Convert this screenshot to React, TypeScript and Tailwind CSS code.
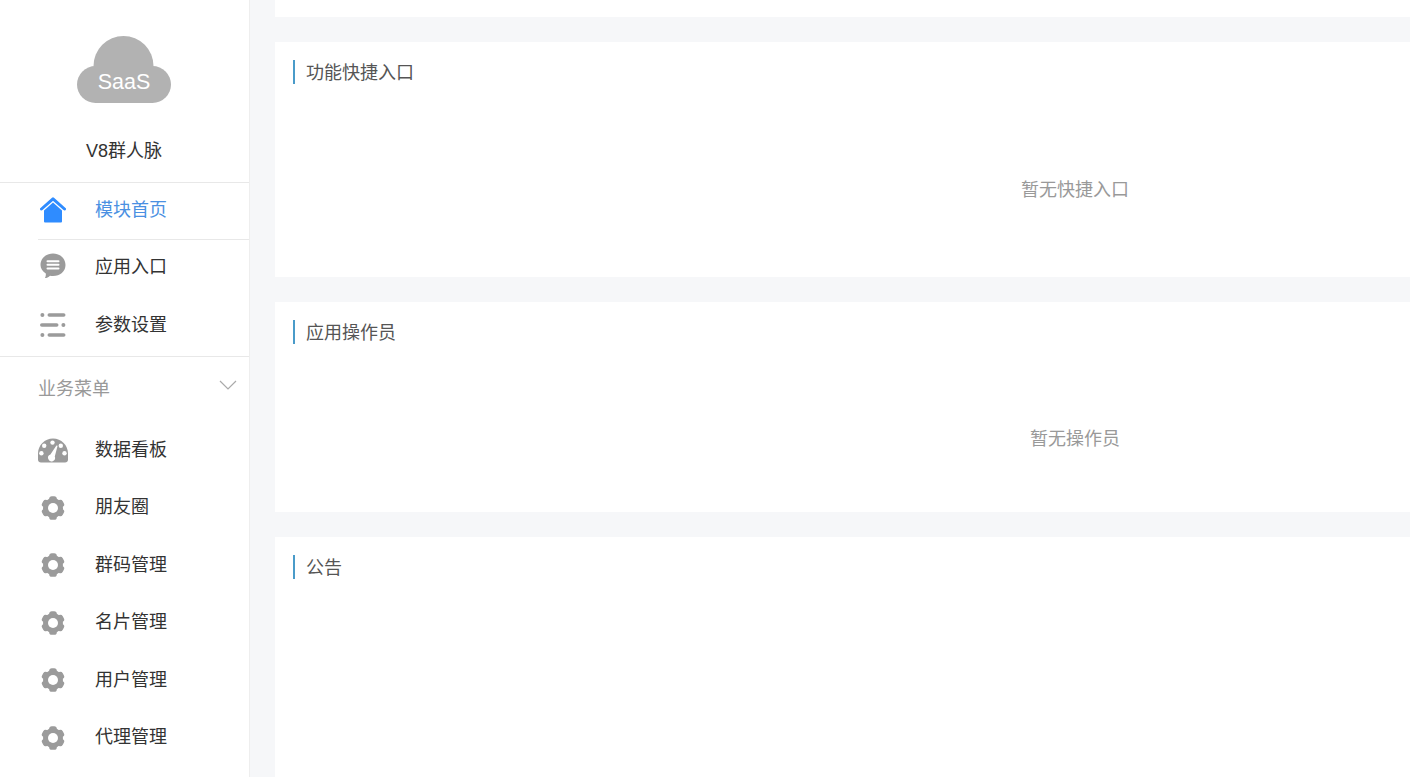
import React from 'react';

const HomeIcon = () => (
  <svg width="26" height="26" viewBox="0 0 26 26">
    <path d="M1.5 12 L13 1.8 L24.5 12" fill="none" stroke="#2f8cff" strokeWidth="3" strokeLinecap="round" strokeLinejoin="round" />
    <path d="M4 13.5 L13 5.6 L22 13.5 V24.5 a1 1 0 0 1 -1 1 H5 a1 1 0 0 1 -1 -1 Z" fill="#2f8cff" />
  </svg>
);

const ChatIcon = () => (
  <svg width="26" height="26" viewBox="0 0 26 26" className="mb-1">
    <path d="M13 .5 C20 .5 25.5 5.2 25.5 12 C25.5 18.5 20 23 13 23 C12 23 11 22.9 10 22.7 C8.6 24.2 6.6 25 5 25 C5.8 23.6 6 22 5.8 20.6 C2.6 18.4 .5 15.5 .5 12 C.5 5.2 6 .5 13 .5 Z" fill="#9b9b9b" />
    <rect x="6.5" y="7.2" width="13" height="2" rx="1" fill="#fff" />
    <rect x="6.5" y="10.8" width="13" height="2" rx="1" fill="#fff" />
    <rect x="6.5" y="14.4" width="13" height="2" rx="1" fill="#fff" />
  </svg>
);

const ListIcon = () => (
  <svg width="26" height="26" viewBox="0 0 26 26" fill="#9b9b9b">
    <circle cx="2.4" cy="3" r="2" />
    <rect x="7.5" y="1.2" width="18" height="3.6" rx="1.8" />
    <rect x="0" y="11.2" width="18.5" height="3.6" rx="1.8" />
    <circle cx="23.4" cy="13" r="2" />
    <circle cx="2.4" cy="23" r="2" />
    <rect x="7.5" y="21.2" width="18" height="3.6" rx="1.8" />
  </svg>
);

const GaugeIcon = () => (
  <svg width="30" height="25" viewBox="0 0 30 25">
    <path d="M15 .5 C23.3 .5 30 7.2 30 15.5 V21.5 C30 23.3 28.8 24.5 27 24.5 H3 C1.2 24.5 0 23.3 0 21.5 V15.5 C0 7.2 6.7 .5 15 .5 Z" fill="#9b9b9b" />
    <circle cx="14.5" cy="4.6" r="2.2" fill="#fff" />
    <circle cx="6.2" cy="7.8" r="2.2" fill="#fff" />
    <circle cx="22.8" cy="7.8" r="2.2" fill="#fff" />
    <circle cx="3.4" cy="15.2" r="2.2" fill="#fff" />
    <circle cx="26.5" cy="15.2" r="2.2" fill="#fff" />
    <path d="M18.4 7.5 L19.6 7.8 L16.8 18.6 A3.5 3.5 0 1 1 12.4 16.6 Z" fill="#fff" />
  </svg>
);

const GearIcon = () => (
  <svg width="26" height="26" viewBox="0 0 26 26" fill="#9b9b9b">
    <circle cx="13" cy="13" r="10" />
    {[0, 60, 120, 180, 240, 300].map((deg) => (
      <rect key={deg} x="9.2" y="1.2" width="7.6" height="7" rx="2.6" transform={`rotate(${deg} 13 13)`} />
    ))}
    <circle cx="13" cy="13" r="5" fill="#fff" />
  </svg>
);

const topMenu = [
  { name: '应用入口', icon: <ChatIcon /> },
  { name: '参数设置', icon: <ListIcon /> },
];

const bizMenu = [
  { name: '数据看板', icon: <GaugeIcon /> },
  { name: '朋友圈', icon: <GearIcon /> },
  { name: '群码管理', icon: <GearIcon /> },
  { name: '名片管理', icon: <GearIcon /> },
  { name: '用户管理', icon: <GearIcon /> },
  { name: '代理管理', icon: <GearIcon /> },
];

const MenuRow = ({ name, icon, className = '' }: { name: string; icon: React.ReactNode; className?: string }) => (
  <div className={`flex h-[57.5px] items-center pl-[38px] ${className}`}>
    <div className="flex w-[30px] justify-center">{icon}</div>
    <span className="ml-[27px] text-[18px] text-[#333]">{name}</span>
  </div>
);

const Card = ({ title, empty, className }: { title: string; empty?: React.ReactNode; className: string }) => (
  <div className={`w-[1600px] shrink-0 bg-white pt-[18px] ${className}`}>
    <div className="ml-[18px] flex h-6 items-center border-l-2 border-[#4a9bc9] pl-[11px] pt-[2px] text-[18px] text-[#555]">
      {title}
    </div>
    {empty}
  </div>
);

export default function App() {
  return (
    <div className="flex h-[777px] overflow-hidden bg-[#f6f7f9] font-['Liberation_Sans','Noto_Sans_CJK_SC',sans-serif]">
      <aside className="w-[250px] shrink-0 overflow-hidden border-r border-[#eee] bg-white">
        <div className="flex h-[183px] flex-col items-center border-b border-[#e8e8e8] pr-px pt-9">
          <svg width="94" height="67" viewBox="0 0 94 67">
            <g fill="#b2b2b2">
              <circle cx="46.5" cy="30" r="30" />
              <circle cx="18.5" cy="48.5" r="18.5" />
              <circle cx="75.5" cy="48.5" r="18.5" />
              <rect x="18.5" y="30" width="57" height="37" />
            </g>
            <text x="47" y="53" textAnchor="middle" fill="#fff" fontSize="21.5" fontFamily="Liberation Sans">SaaS</text>
          </svg>
          <div className="mt-[35px] text-[18px] text-[#333]">V8群人脉</div>
        </div>

        <div className="ml-[38px] flex h-[57px] items-center border-b border-[#e8e8e8] pb-[2px]">
          <div className="ml-[2px]">
            <HomeIcon />
          </div>
          <span className="ml-[29px] text-[18px] text-[#4a90e2]">模块首页</span>
        </div>

        <div className="h-[117px] border-b border-[#e8e8e8]">
          {topMenu.map((item) => (
            <MenuRow key={item.name} name={item.name} icon={item.icon} className="pb-[2px]" />
          ))}
        </div>

        <div className="flex h-[64.5px] items-center justify-between pl-[38px] pr-3">
          <span className="text-[18px] text-[#999]">业务菜单</span>
          <svg width="18" height="10" viewBox="0 0 18 10" className="mb-2" fill="none" stroke="#aaa" strokeWidth="1.2">
            <path d="M1 1 L9 9 L17 1" />
          </svg>
        </div>

        {bizMenu.map((item) => (
          <MenuRow key={item.name} name={item.name} icon={item.icon} />
        ))}
      </aside>

      <main className="flex min-w-0 flex-1 flex-col gap-[25px] overflow-hidden pl-[25px]">
        <div className="h-[17px] w-[1600px] shrink-0 bg-white" />
        <Card
          title="功能快捷入口"
          className="h-[235px]"
          empty={<div className="mt-[93px] text-center text-[18px] text-[#999]">暂无快捷入口</div>}
        />
        <Card
          title="应用操作员"
          className="h-[210px]"
          empty={<div className="mt-[82px] text-center text-[18px] text-[#999]">暂无操作员</div>}
        />
        <Card title="公告" className="h-[300px]" />
      </main>
    </div>
  );
}
